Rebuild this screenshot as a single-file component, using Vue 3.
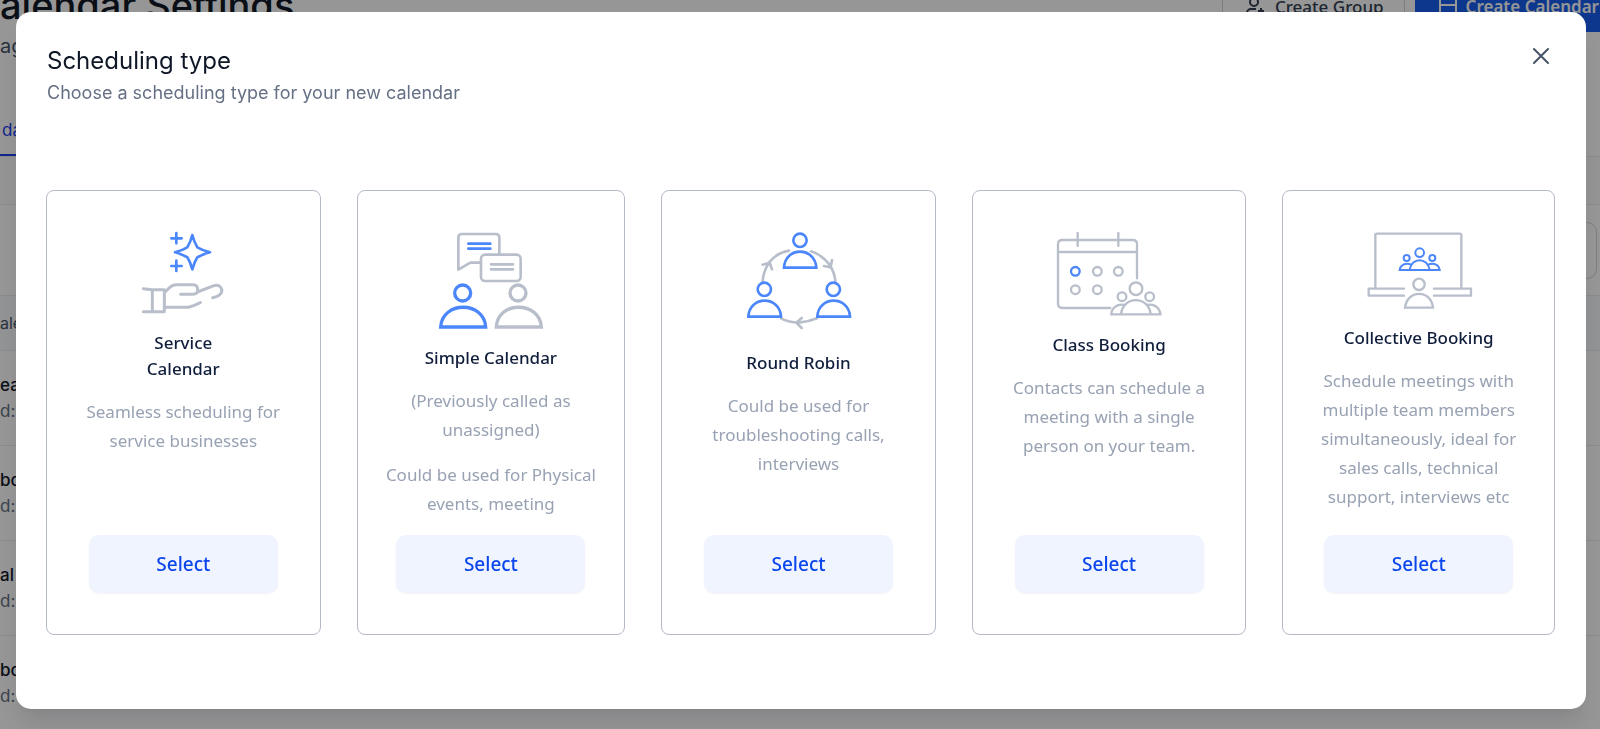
<template>
  <div class="page">
    <header class="page-header">
      <h1 class="page-title">alendar Settings</h1>
      <div class="page-actions">
        <button class="page-btn" type="button">
          <svg width="22" height="22" viewBox="0 0 22 22" fill="none" stroke="currentColor" stroke-width="2">
            <circle cx="9" cy="7" r="4" />
            <path d="M2 20v-2a4 4 0 0 1 4-4h5M16 13v6M13 16h6" />
          </svg>
          Create Group
        </button>
        <button class="page-btn primary" type="button">
          <svg width="20" height="22" viewBox="0 0 20 22" fill="none" stroke="currentColor" stroke-width="2">
            <rect x="2" y="3" width="16" height="18" rx="1" />
            <path d="M2 10h16M6 0v5M14 0v5" />
          </svg>
          Create Calendar
        </button>
      </div>
    </header>
    <p class="page-text">ag</p>
    <nav class="page-tabs"><a href="#" class="page-tab">da</a></nav>
    <div class="page-gap"></div>
    <div class="page-filter"><input class="page-search" type="text" aria-label="Search" /></div>
    <div class="page-columns">ale</div>
    <div v-for="(row, i) in rows" :key="i" class="page-row">
      <span class="row-name">{{ row.name }}</span>
      <span class="row-id">{{ row.id }}</span>
    </div>
  </div>

  <div class="overlay">
    <section class="modal" role="dialog" aria-labelledby="modal-title">
      <header class="modal-header">
        <div>
          <h2 id="modal-title" class="modal-title">Scheduling type</h2>
          <p class="modal-subtitle">Choose a scheduling type for your new calendar</p>
        </div>
        <button class="modal-close" type="button" aria-label="Close">
          <svg width="20" height="20" viewBox="0 0 20 20" fill="none" stroke="currentColor" stroke-width="2" stroke-linecap="round">
            <path d="M3 3l14 14M17 3L3 17" />
          </svg>
        </button>
      </header>

      <div class="cards">
        <article v-for="type in types" :key="type.key" class="card">
          <svg v-if="type.key === 'service'" class="icon" width="84" height="84" viewBox="36 30 252 252" stroke-width="9">
            <g class="blue" stroke-width="8">
              <path d="M190 45Q196 68 205 82Q220 91 243 97Q220 103 205 112Q196 126 190 148Q184 126 175 112Q160 103 138 97Q160 91 175 82Q184 68 190 45Z" />
              <path d="M142 39v31M127 55h31M142 122v31M127 138h31" />
            </g>
            <path d="M43 206L70 209H106V275H43M70 209V275M106 217C118 210 122 194 142 194H193C204 194 208 205 205 216Q202 223 190 223H155M205 216L255 197C271 191 284 207 276 220Q270 230 251 233M106 262H170C187 263 199 254 214 248" />
          </svg>

          <svg v-else-if="type.key === 'simple'" class="icon" width="108" height="99" viewBox="22 15 324 297" stroke-width="8">
            <path d="M209 88V38Q209 27 198 27H97Q86 27 86 38V134L122 113H151" />
            <rect x="154" y="89" width="119" height="79" rx="12" />
            <path d="M184 118H250M184 133H250" />
            <circle cx="265" cy="204" r="24" stroke-width="10" />
            <path d="M200 306C203 227 330 227 335 306Z" stroke-width="10" stroke-linejoin="miter" />
            <g class="blue">
              <path d="M116 56H182M116 71H182" />
              <circle cx="99" cy="204" r="24" stroke-width="10" />
              <path d="M33 306C37 227 164 227 168 306Z" stroke-width="10" stroke-linejoin="miter" />
            </g>
          </svg>

          <svg v-else-if="type.key === 'round'" class="icon" width="108" height="104" viewBox="30 15 324 312" stroke-width="8">
            <path d="M86 170Q87 142 105 113Q127 84 165 77M86 119L107 113L114 133M231 79Q260 87 284 116Q304 144 304 171M270 123L290 127L294 105M142 281Q165 292 194 293Q223 291 249 280M203 279L187 293L203 309" />
            <g class="blue" stroke-linejoin="miter">
              <circle cx="198" cy="46" r="20" />
              <path d="M150 128C153 64 243 64 247 128Z" />
              <circle cx="91" cy="193" r="20" />
              <path d="M43 275C46 211 138 211 141 275Z" />
              <circle cx="298" cy="193" r="20" />
              <path d="M250 275C253 211 345 211 348 275Z" />
            </g>
          </svg>

          <svg v-else-if="type.key === 'class'" class="icon" width="108" height="86" viewBox="33 15 324 258" stroke-width="7">
            <path d="M279 160V58Q279 45 266 45H55Q42 45 42 58V235Q42 249 55 249H199M42 81H279M101 24V63M223 24V63" />
            <circle cx="160" cy="139" r="13" />
            <circle cx="223" cy="139" r="13" />
            <circle cx="94" cy="194" r="13" />
            <circle cx="160" cy="194" r="13" />
            <circle cx="276" cy="191" r="19" />
            <circle cx="234" cy="215" r="13" />
            <circle cx="317" cy="215" r="13" />
            <path d="M231 268C237 211 314 211 320 268M242 240C218 235 202 251 202 268H349C348 250 331 235 310 240" stroke-linejoin="miter" />
            <circle class="blue" cx="94" cy="139" r="13" />
          </svg>

          <svg v-else class="icon" width="108" height="79" viewBox="30 15 324 237" stroke-width="7">
            <path d="M61 189V31Q61 26 66 26H314Q319 26 319 31V189M147 191H41V212H147M237 191H348V212H237" />
            <circle cx="192" cy="178" r="17" />
            <path d="M150 248C156 193 229 193 234 248Z" stroke-linejoin="miter" />
            <g class="blue" stroke-width="6" stroke-linejoin="miter">
              <circle cx="194" cy="83" r="13" />
              <circle cx="155" cy="99" r="9" />
              <circle cx="232" cy="99" r="9" />
              <path d="M164 134C170 96 217 96 224 134M168 118C148 112 135 123 134 135H254C252 121 239 112 220 118" />
            </g>
          </svg>

          <h3 class="card-title">{{ type.title }}</h3>
          <p v-for="text in type.texts" :key="text" class="card-text">{{ text }}</p>
          <button class="card-select" type="button">Select</button>
        </article>
      </div>
    </section>
  </div>
</template>

<script setup>
const rows = [
  { name: "ea", id: "d:" },
  { name: "bo", id: "d:" },
  { name: "al", id: "d:" },
  { name: "bo", id: "d: y" },
]

const types = [
  {
    key: "service",
    title: "Service\nCalendar",
    texts: ["Seamless scheduling for service businesses"],
  },
  {
    key: "simple",
    title: "Simple Calendar",
    texts: ["(Previously called as unassigned)", "Could be used for Physical events, meeting"],
  },
  {
    key: "round",
    title: "Round Robin",
    texts: ["Could be used for troubleshooting calls, interviews"],
  },
  {
    key: "class",
    title: "Class Booking",
    texts: ["Contacts can schedule a meeting with a single person on your team."],
  },
  {
    key: "collective",
    title: "Collective Booking",
    texts: [
      "Schedule meetings with multiple team members simultaneously, ideal for sales calls, technical support, interviews etc",
    ],
  },
]
</script>

<style>
body {
  margin: 0;
  overflow: hidden;
}
</style>

<style scoped>
* {
  box-sizing: border-box;
}

h1,
h2,
h3,
p {
  margin: 0;
  font-weight: 400;
}

.page {
  height: 100vh;
  overflow: hidden;
  background: #fff;
  color: #101828;
  font-family: Inter, sans-serif;
  font-size: 17px;
}

.page-header {
  display: flex;
  justify-content: space-between;
  align-items: flex-end;
  height: 32px;
}

.page-title {
  font-size: 38px;
  font-weight: 500;
  line-height: 54px;
}

.page-actions {
  display: flex;
  gap: 10px;
  margin-right: -8px;
}

.page-btn {
  display: flex;
  align-items: center;
  gap: 8px;
  height: 52px;
  padding: 0 20px 0 22px;
  border: 1px solid #d0d5dd;
  background: #fff;
  color: #344054;
  font-family: "Noto Sans", sans-serif;
  font-size: 17px;
  font-weight: 500;
}

.page-btn.primary {
  padding: 0 8px 0 22px;
  border-color: #155eef;
  background: #155eef;
  color: #fff;
  font-weight: 600;
}

.page-text {
  padding-top: 2px;
  color: #475467;
  font-size: 20px;
  line-height: 24px;
}

.page-tabs {
  display: flex;
  height: 99px;
  align-items: flex-end;
  border-bottom: 1px solid #eaecf0;
}

.page-tab {
  padding: 0 0 12px 2px;
  border-bottom: 2px solid #1d3fef;
  color: #1d3fef;
  line-height: 24px;
  text-decoration: none;
}

.page-gap {
  height: 48px;
  border-bottom: 1px solid #eaecf0;
  background: #fcfcfd;
}

.page-filter {
  display: flex;
  justify-content: flex-end;
  align-items: center;
  height: 90px;
  padding: 0 3px 0 0;
}

.page-search {
  width: 360px;
  height: 57px;
  border: 1px solid #d0d5dd;
  border-radius: 10px;
  background: #fff;
}

.page-columns {
  height: 56px;
  border: solid #eaecf0;
  border-width: 1px 0;
  background: #f9fafb;
  color: #475467;
  font-size: 16px;
  line-height: 54px;
}

.page-row {
  display: flex;
  flex-direction: column;
  justify-content: center;
  height: 95px;
  border-bottom: 1px solid #eaecf0;
  line-height: 26px;
}

.row-name {
  font-weight: 500;
}

.row-id {
  color: #667085;
}

.overlay {
  position: fixed;
  inset: 0;
  padding: 12px 14px 0 16px;
  background: rgba(0, 0, 0, 0.41);
}

.modal {
  padding: 28px 31px 74px 30px;
  border-radius: 15px;
  background: #fff;
  box-shadow: 0 20px 24px -4px rgba(16, 24, 40, 0.1), 0 8px 8px -4px rgba(16, 24, 40, 0.04);
}

.modal-header {
  display: flex;
  justify-content: space-between;
  align-items: flex-start;
  height: 150px;
  padding-left: 1px;
  font-family: Inter, sans-serif;
}

.modal-title {
  padding-top: 5px;
  color: #101828;
  font-size: 24px;
  line-height: 32px;
}

.modal-subtitle {
  padding-top: 2px;
  color: #667085;
  font-size: 18px;
  line-height: 28px;
}

.modal-close {
  display: flex;
  align-items: center;
  justify-content: center;
  width: 28px;
  height: 32px;
  padding: 0;
  border: none;
  background: transparent;
  color: #475467;
  cursor: pointer;
}

.cards {
  display: grid;
  grid-template-columns: 137fr 134fr 137fr 137fr 136fr;
  gap: 36px;
  font-family: "Noto Sans", sans-serif;
}

.card {
  display: flex;
  flex-direction: column;
  align-items: center;
  min-height: 445px;
  padding: 39px 24px 41px;
  border: 1px solid #b4bac8;
  border-radius: 8px;
  text-align: center;
}

.icon {
  flex-shrink: 0;
  margin-bottom: 16px;
  fill: none;
  stroke: #b8bfcb;
  stroke-linecap: round;
  stroke-linejoin: round;
}

.blue {
  stroke: #4b87fb;
}

.card-title {
  margin-bottom: 15px;
  color: #101e3c;
  font-size: 17px;
  font-weight: 500;
  line-height: 26px;
  white-space: pre-line;
}

.card-text {
  color: #98a2b3;
  font-size: 17px;
  line-height: 29px;
}

.card-text + .card-text {
  margin-top: 16px;
}

.card-select {
  width: 189px;
  height: 58px;
  flex-shrink: 0;
  margin-top: auto;
  border: none;
  border-radius: 10px;
  background: #eff4ff;
  box-shadow: 0 1px 2px rgba(16, 24, 40, 0.05);
  color: #0b46ec;
  font-family: inherit;
  font-size: 19px;
  font-weight: 500;
  cursor: pointer;
}
</style>
